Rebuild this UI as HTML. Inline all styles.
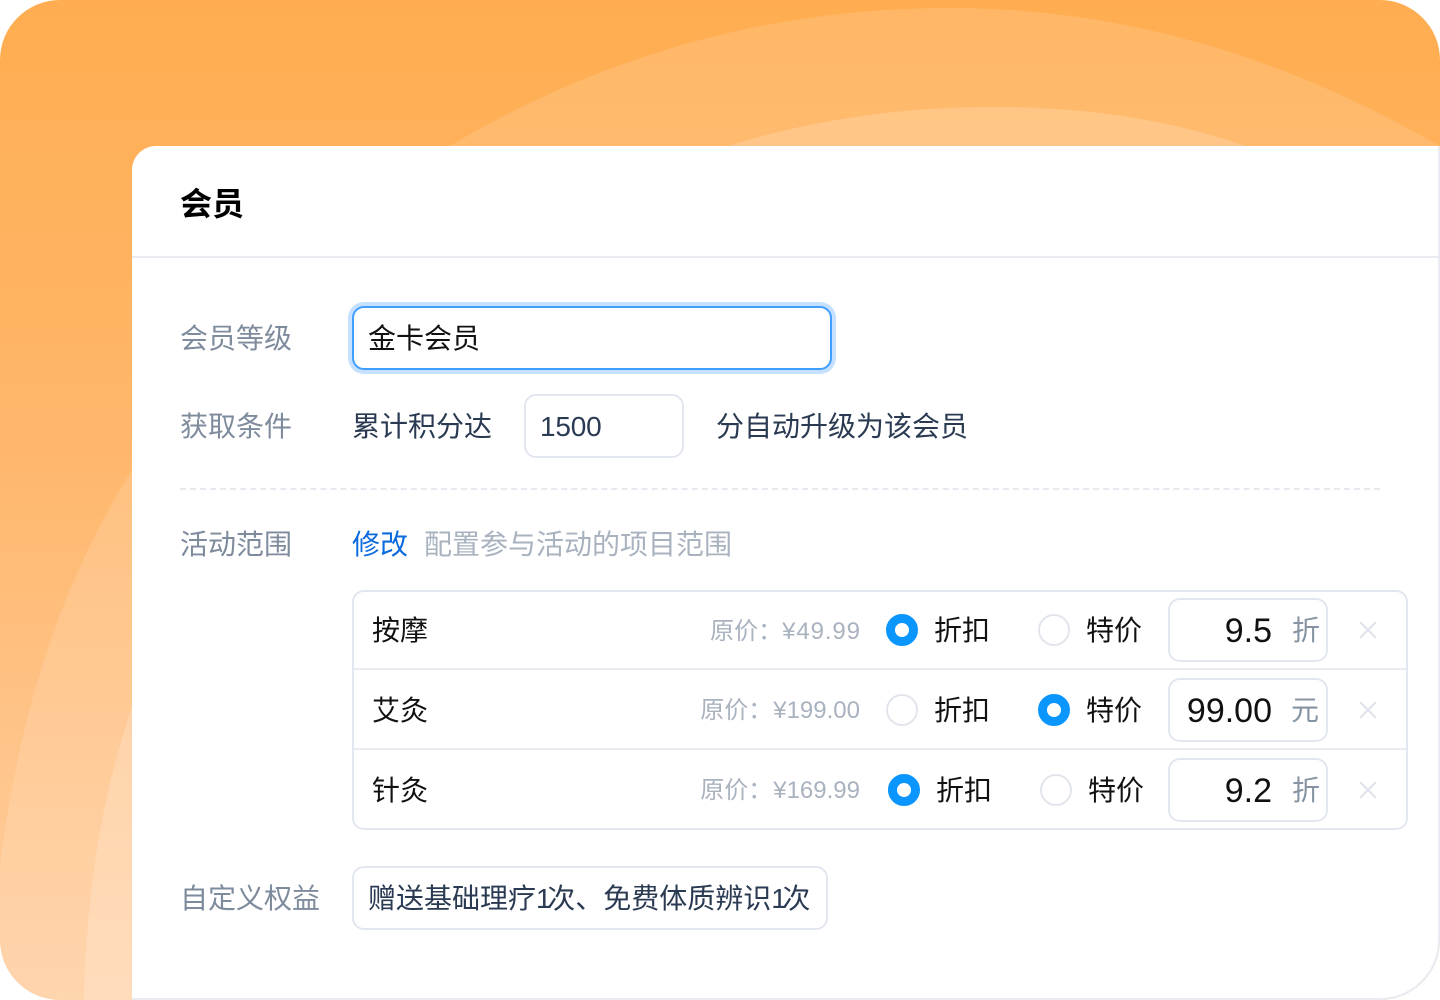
<!DOCTYPE html>
<html lang="zh"><head><meta charset="utf-8"><title>会员</title>
<style>
html,body{margin:0;padding:0;background:#fff}
#p{position:relative;width:1440px;height:1000px;overflow:hidden;font-family:"Liberation Sans","Noto Sans CJK SC",sans-serif;font-size:28px;color:#111}
#p svg.bg{position:absolute;left:0;top:0}
.t{position:absolute;line-height:40px;height:40px;white-space:nowrap}
.b{position:absolute;box-sizing:border-box;border:2px solid #E2E6F0;border-radius:12px;background:#fff}
.l{color:#7E8B9C}
.d{color:#2A3A52}
.pr{color:#A9B2BF;font-size:24px;text-align:right;right:580px}
.u{color:#8593A3}
.n{font-size:34px;color:#111;text-align:right;right:168px}
.r{position:absolute;box-sizing:border-box;width:32px;height:32px;border-radius:50%;border:2px solid #E2E6EC;background:#fff}
.r.on{border:9.5px solid #0A95FF}
.x{position:absolute}
.one{letter-spacing:-4.4px}
</style></head><body><div id="p">
<svg class="bg" width="1440" height="1000" viewBox="0 0 1440 1000">
<defs>
<linearGradient id="g" x1="0" y1="0" x2="0" y2="1"><stop offset="0" stop-color="#FFAD50"/><stop offset=".45" stop-color="#FFB76C"/><stop offset="1" stop-color="#FFCFA2"/></linearGradient>
<clipPath id="c"><path d="M60 0H1380A60 60 0 0 1 1440 60V940A60 60 0 0 1 1380 1000H60A60 60 0 0 1 0 940V60A60 60 0 0 1 60 0Z"/></clipPath>
</defs>
<g clip-path="url(#c)">
<rect width="1440" height="1000" fill="url(#g)"/>
<path d="M0 1000V866C22 690 70 570 132 470C190 360 320 210 500 118C640 45 790 8 950 8C1130 8 1290 60 1440 146V1000Z" fill="#fff" fill-opacity=".13"/>
<path d="M84 1000C86 900 100 800 132 707C190 500 360 330 728 146C810 120 900 107 992 107C1090 107 1170 120 1246 146H1300V1000Z" fill="#fff" fill-opacity=".18"/>
</g>
</svg>
<div style="position:absolute;left:132px;top:146px;width:1308px;height:854px;box-sizing:border-box;background:#fff;border-top-left-radius:24px;border-bottom-right-radius:60px;border-right:2px solid #E8EBF2;border-bottom:2px solid #E8EBF2"></div>
<div style="position:absolute;left:132px;top:256px;width:1306px;height:2px;background:#E8EBF2"></div>
<div class="t" style="left:180px;top:184px;font-size:32px;font-weight:700;color:#000">会员</div>

<div class="t l" style="left:180px;top:319px">会员等级</div>
<div class="b" style="left:352px;top:306px;width:480px;height:64px;border-color:#409EFF;box-shadow:0 0 0 4px #C5E1FF"></div>
<div class="t" style="left:368px;top:319px;color:#111">金卡会员</div>

<div class="t l" style="left:180px;top:407px">获取条件</div>
<div class="t d" style="left:352px;top:407px">累计积分达</div>
<div class="b" style="left:524px;top:394px;width:160px;height:64px"></div>
<div class="t d" style="left:540px;top:407px;font-size:28px;letter-spacing:-.2px">1500</div>
<div class="t d" style="left:716px;top:407px">分自动升级为该会员</div>

<div style="position:absolute;left:180px;top:488px;width:1200px;height:0;border-top:2px dashed #E6E9EF"></div>

<div class="t l" style="left:180px;top:525px">活动范围</div>
<div class="t" style="left:352px;top:525px;color:#0B6BDE">修改</div>
<div class="t" style="left:424px;top:525px;color:#A9B2BF">配置参与活动的项目范围</div>

<div class="b" style="left:352px;top:590px;width:1056px;height:240px"></div>
<div style="position:absolute;left:354px;top:668px;width:1052px;height:2px;background:#E8EBF2"></div>
<div style="position:absolute;left:354px;top:748px;width:1052px;height:2px;background:#E8EBF2"></div>

<!-- row 1 -->
<div class="t" style="left:372px;top:611px">按摩</div>
<div class="t pr" style="top:612px">原价：<span style="letter-spacing:.9px;margin-right:-.9px">¥49.99</span></div>
<div class="r on" style="left:886px;top:614px"></div>
<div class="t" style="left:934px;top:611px">折扣</div>
<div class="r" style="left:1038px;top:614px"></div>
<div class="t" style="left:1086px;top:611px">特价</div>
<div class="b" style="left:1168px;top:598px;width:160px;height:64px"></div>
<div class="t n" style="top:611px">9.5</div>
<div class="t u" style="left:1292px;top:611px">折</div>
<svg class="x" style="left:1359px;top:621px" width="18" height="18" viewBox="0 0 18 18"><path d="M1 1L17 17M17 1L1 17" stroke="#DFE3EB" stroke-width="2" fill="none"/></svg>

<!-- row 2 -->
<div class="t" style="left:372px;top:691px">艾灸</div>
<div class="t pr" style="top:691px"><span style="margin-right:1px">原价：</span>¥199.00</div>
<div class="r" style="left:886px;top:694px"></div>
<div class="t" style="left:934px;top:691px">折扣</div>
<div class="r on" style="left:1038px;top:694px"></div>
<div class="t" style="left:1086px;top:691px">特价</div>
<div class="b" style="left:1168px;top:678px;width:160px;height:64px"></div>
<div class="t n" style="top:691px">99.00</div>
<div class="t u" style="left:1291px;top:691px">元</div>
<svg class="x" style="left:1359px;top:701px" width="18" height="18" viewBox="0 0 18 18"><path d="M1 1L17 17M17 1L1 17" stroke="#DFE3EB" stroke-width="2" fill="none"/></svg>

<!-- row 3 -->
<div class="t" style="left:372px;top:771px">针灸</div>
<div class="t pr" style="top:771px"><span style="margin-right:1px">原价：</span>¥169.99</div>
<div class="r on" style="left:888px;top:774px"></div>
<div class="t" style="left:936px;top:771px">折扣</div>
<div class="r" style="left:1040px;top:774px"></div>
<div class="t" style="left:1088px;top:771px">特价</div>
<div class="b" style="left:1168px;top:758px;width:160px;height:64px"></div>
<div class="t n" style="top:771px">9.2</div>
<div class="t u" style="left:1292px;top:771px">折</div>
<svg class="x" style="left:1359px;top:781px" width="18" height="18" viewBox="0 0 18 18"><path d="M1 1L17 17M17 1L1 17" stroke="#DFE3EB" stroke-width="2" fill="none"/></svg>

<div class="t l" style="left:180px;top:879px">自定义权益</div>
<div class="b" style="left:352px;top:866px;width:476px;height:64px"></div>
<div class="t d" style="left:368px;top:879px">赠送基础理疗<span class="one">1</span>次、免费体质辨识<span class="one">1</span>次</div>
</div></body></html>
